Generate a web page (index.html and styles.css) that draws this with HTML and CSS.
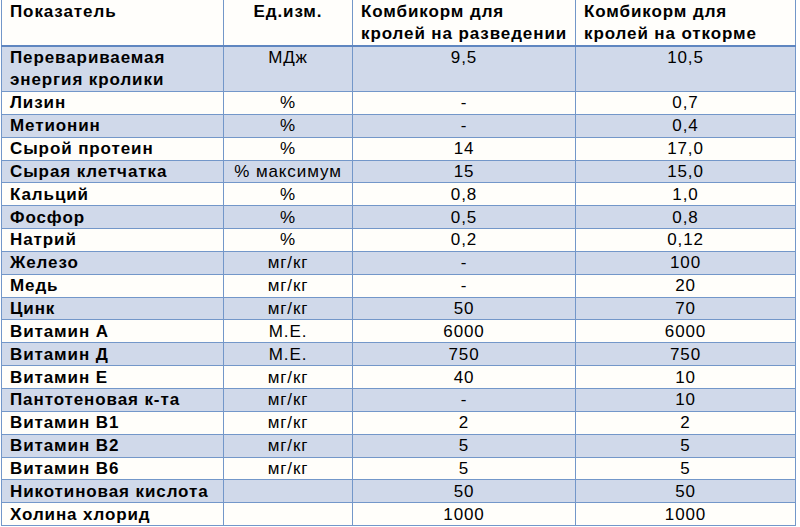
FILE: index.html
```html
<!DOCTYPE html>
<html lang="ru">
<head>
<meta charset="utf-8">
<link rel="stylesheet" href="styles.css">
</head>
<body>
<table class="feed">
  <colgroup>
    <col class="c-name"><col class="c-unit"><col class="c-a"><col class="c-b">
  </colgroup>
  <thead>
    <tr class="head">
      <th class="name">Показатель</th>
      <th class="unit">Ед.изм.</th>
      <th class="lft">Комбикорм для<br>кролей на разведении</th>
      <th class="lft">Комбикорм для<br>кролей на откорме</th>
    </tr>
  </thead>
  <tbody>
    <tr class="blue tall"><td class="name">Перевариваемая<br>энергия кролики</td><td class="top">МДж</td><td class="top">9,5</td><td class="top">10,5</td></tr>
    <tr><td class="name">Лизин</td><td>%</td><td>-</td><td>0,7</td></tr>
    <tr class="blue"><td class="name">Метионин</td><td>%</td><td>-</td><td>0,4</td></tr>
    <tr><td class="name">Сырой протеин</td><td>%</td><td>14</td><td>17,0</td></tr>
    <tr class="blue"><td class="name">Сырая клетчатка</td><td>% максимум</td><td>15</td><td>15,0</td></tr>
    <tr><td class="name">Кальций</td><td>%</td><td>0,8</td><td>1,0</td></tr>
    <tr class="blue"><td class="name">Фосфор</td><td>%</td><td>0,5</td><td>0,8</td></tr>
    <tr><td class="name">Натрий</td><td>%</td><td>0,2</td><td>0,12</td></tr>
    <tr class="blue"><td class="name">Железо</td><td>мг/кг</td><td>-</td><td>100</td></tr>
    <tr><td class="name">Медь</td><td>мг/кг</td><td>-</td><td>20</td></tr>
    <tr class="blue"><td class="name">Цинк</td><td>мг/кг</td><td>50</td><td>70</td></tr>
    <tr><td class="name">Витамин А</td><td>М.Е.</td><td>6000</td><td>6000</td></tr>
    <tr class="blue"><td class="name">Витамин Д</td><td>М.Е.</td><td>750</td><td>750</td></tr>
    <tr><td class="name">Витамин Е</td><td>мг/кг</td><td>40</td><td>10</td></tr>
    <tr class="blue"><td class="name">Пантотеновая к-та</td><td>мг/кг</td><td>-</td><td>10</td></tr>
    <tr><td class="name">Витамин В1</td><td>мг/кг</td><td>2</td><td>2</td></tr>
    <tr class="blue"><td class="name">Витамин В2</td><td>мг/кг</td><td>5</td><td>5</td></tr>
    <tr><td class="name">Витамин В6</td><td>мг/кг</td><td>5</td><td>5</td></tr>
    <tr class="blue"><td class="name">Никотиновая кислота</td><td></td><td>50</td><td>50</td></tr>
    <tr><td class="name">Холина хлорид</td><td></td><td>1000</td><td>1000</td></tr>
  </tbody>
</table>
</body>
</html>
```

FILE: styles.css
```css
html, body {
  margin: 0;
  padding: 0;
  background: #ffffff;
}
body {
  padding: 0 0 0 1px;
  font-family: "Liberation Sans", Arial, sans-serif;
  font-size: 17px;
  letter-spacing: 0.9px;
  color: #000;
}
.feed {
  border-collapse: collapse;
  table-layout: fixed;
  width: 794px;
}
.c-name { width: 222px; }
.c-unit { width: 129px; }
.c-a { width: 223px; }
.c-b { width: 220px; }

.feed th, .feed td {
  border: 1px solid #7397c9;
  padding: 1px 8px 0;
  line-height: 20px;
  text-align: center;
  vertical-align: middle;
  white-space: nowrap;
  overflow: hidden;
}
.feed thead th {
  border-top: none;
  border-bottom: 2px solid #5f86c0;
  background: #fffefb;
  font-weight: bold;
  vertical-align: top;
  padding-top: 1px;
  line-height: 22px;
  height: 43px;
}
.feed thead th.name { text-align: left; }
.feed thead th.unit { text-align: center; }
.feed thead th.lft { text-align: left; }

.feed td.name {
  text-align: left;
  font-weight: bold;
}
.feed tbody tr { height: 22.85px; background: #fffefa; }
.feed tbody tr.blue { background: #d0d9ea; }
.feed tbody tr.tall td { line-height: 22px; height: 44px; padding-top: 0; }
.feed tbody tr.tall td.top { vertical-align: top; }
```
